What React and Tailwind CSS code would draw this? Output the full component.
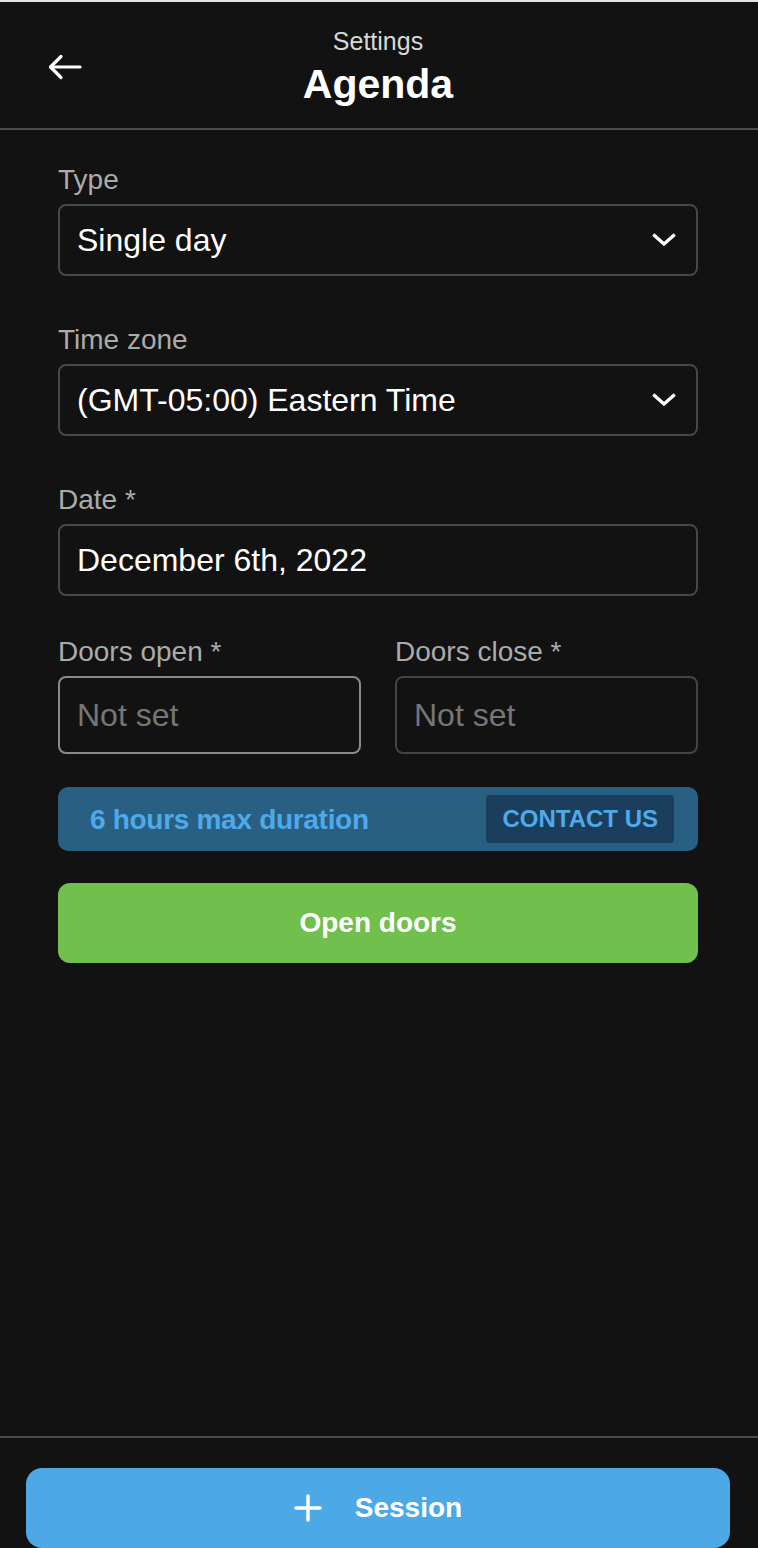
import React from 'react';

const Chevron = () => (
  <svg width="24" height="14" viewBox="0 0 24 14" fill="none" stroke="currentColor" strokeWidth="3.2" strokeLinecap="square">
    <path d="M2.5 2.5L12 11l9.5-8.5" />
  </svg>
);

const Field = ({ label, children, className = '' }) => (
  <div className={className}>
    <div className="text-[28px] leading-[32px] text-[#ababab] mb-[8px]">{label}</div>
    {children}
  </div>
);

const SelectBox = ({ value }) => (
  <div className="h-[72px] border-2 border-[#484848] rounded-[8px] pl-[17px] pr-[20px] flex items-center justify-between text-white">
    <span className="text-[32px] leading-none">{value}</span>
    <Chevron />
  </div>
);

export default function App() {
  return (
    <div
      className="w-[758px] h-[1548px] bg-[#121212] flex flex-col overflow-hidden"
      style={{ fontFamily: '"Liberation Sans", Arial, sans-serif' }}
    >
      <div className="h-[2px] bg-[#e4e4e4]" />

      {/* header */}
      <header className="relative h-[128px] border-b-2 border-[#4b4b4b] flex flex-col items-center pt-[25px]">
        <button className="absolute left-[48px] top-[52px] text-white">
          <svg width="34" height="26" viewBox="0 0 34 26" fill="none" stroke="currentColor" strokeWidth="3.2" strokeLinecap="round" strokeLinejoin="round">
            <path d="M32 13H3" />
            <path d="M13 2.5L2.5 13 13 23.5" />
          </svg>
        </button>
        <div className="text-[25px] leading-[28px] text-[#d8d8d8] -ml-[2px]">Settings</div>
        <div className="mt-[7px] text-[41px] leading-[44px] font-bold text-white -ml-[2px]">Agenda</div>
      </header>

      {/* form */}
      <main className="flex-1 pl-[58px] pr-[60px] pt-[34px]">
        <Field label="Type">
          <SelectBox value="Single day" />
        </Field>

        <Field label="Time zone" className="mt-[48px]">
          <SelectBox value="(GMT-05:00) Eastern Time" />
        </Field>

        <Field label="Date *" className="mt-[48px]">
          <div className="h-[72px] border-2 border-[#484848] rounded-[8px] pl-[17px] flex items-center text-white text-[32px] leading-none">
            December 6th, 2022
          </div>
        </Field>

        <div className="mt-[40px] grid grid-cols-2 gap-[34px]">
          <Field label="Doors open *">
            <div className="h-[78px] border-2 border-[#8a8a8a] rounded-[8px] pl-[17px] flex items-center text-[#767676] text-[32px] leading-none">
              Not set
            </div>
          </Field>
          <Field label="Doors close *">
            <div className="h-[78px] border-2 border-[#444444] rounded-[8px] pl-[17px] flex items-center text-[#767676] text-[32px] leading-none">
              Not set
            </div>
          </Field>
        </div>

        <div className="mt-[33px] h-[64px] rounded-[10px] bg-[#295f82] pl-[32px] pr-[24px] flex items-center justify-between">
          <span className="text-[28px] font-bold text-[#4faaea] tracking-[-0.3px] pt-[2px]">6 hours max duration</span>
          <button className="h-[48px] px-[16px] rounded-[4px] bg-[#1b3e5c] text-[24px] font-bold text-[#4faaea]">
            CONTACT US
          </button>
        </div>

        <button className="mt-[32px] w-full h-[80px] rounded-[12px] bg-[#71c04e] text-white text-[28px] font-bold">
          Open doors
        </button>
      </main>

      {/* footer */}
      <footer className="border-t-2 border-[#4b4b4b] pl-[26px] pr-[28px] pt-[30px] h-[112px]">
        <button className="w-full h-[80px] rounded-[16px] bg-[#4da9e6] text-white flex items-center justify-center gap-[33px]">
          <svg width="28" height="28" viewBox="0 0 28 28" fill="none" stroke="currentColor" strokeWidth="3.4" strokeLinecap="round">
            <path d="M14 2v24M2 14h24" />
          </svg>
          <span className="text-[28px] font-bold">Session</span>
        </button>
      </footer>
    </div>
  );
}
